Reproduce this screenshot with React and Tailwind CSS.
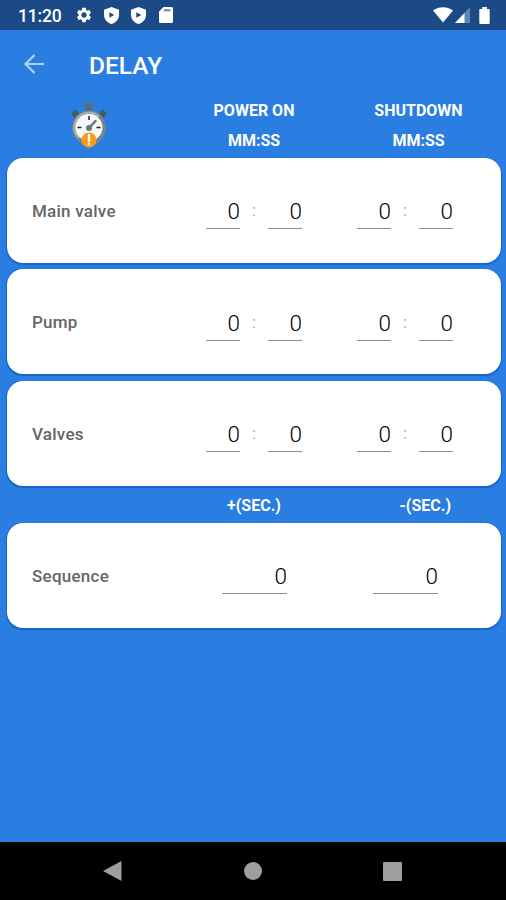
import React, { useState } from 'react';
import { MdSettings } from 'react-icons/md';

const ROWS = ['Main valve', 'Pump', 'Valves'];

function ShieldIcon() {
    return (
        <svg className="w-[15px] h-[17px]" viewBox="0 0 15 17">
            <path d="M7.5 0 15 2.800V8c0 4.200-3.200 7.800-7.500 9C3.200 15.800 0 12.200 0 8V2.800z" fill="#fff" />
            <path d="M5.300 5.200v5.600l5-2.800z" fill="#1b4a86" />
        </svg>
    );
}

function StatusBar() {
    return (
        <div className="flex h-[30px] items-center bg-[#1b4a86] pl-[18px] pr-[16px] text-white">
            <span className="w-[58px] pt-[3px] text-[17.500px] font-medium leading-none tracking-[-0.2px]">11:20</span>
            <MdSettings className="h-[18px] w-[18px] -ml-px" />
            <div className="ml-[11px] flex gap-[12px]">
                <ShieldIcon />
                <ShieldIcon />
            </div>
            <svg className="ml-[13px] h-[16px] w-[14px]" viewBox="0 0 14 16">
                <path d="M4.500 0H12.500a1.500 1.500 0 0 1 1.500 1.500v13a1.500 1.500 0 0 1-1.500 1.500h-11A1.500 1.500 0 0 1 0 14.500V4.500z" fill="#fff" />
                <path d="M5 2h6.500v2.500H5z" fill="#7f9cc0" />
            </svg>
            <svg className="ml-auto h-[16px] w-[20px]" viewBox="0 0 20 16">
                <path d="M0 3.500C5.500-1 14.500-1 20 3.500L10 15.500z" fill="#fff" />
            </svg>
            <svg className="ml-[2px] h-[16px] w-[15px]" viewBox="0 0 15 16">
                <path d="M15 0v16H0z" fill="#5f86b3" />
                <path d="M9.500 5.900V16H0z" fill="#fff" />
            </svg>
            <svg className="ml-[9px] h-[17px] w-[11px]" viewBox="0 0 11 18">
                <path d="M3 0h5v2h2a1 1 0 0 1 1 1v14a1 1 0 0 1-1 1H1a1 1 0 0 1-1-1V3a1 1 0 0 1 1-1h2z" fill="#fff" />
            </svg>
        </div>
    );
}

// 경고 표시가 붙은 스톱워치
function StopwatchIcon() {
    return (
        <svg className="h-[48px] w-[38px]" viewBox="0 0 38 48">
            <rect x="16.500" y="4" width="5" height="6" fill="#56656d" />
            <rect x="14.500" y="1" width="9" height="5" rx="1.500" fill="#5f6f77" />
            <path d="M1 11.500 5.500 7.500l4 4-5 5z" fill="#4b5960" />
            <path d="M37 11.500 32.500 7.500l-4 4 5 5z" fill="#4b5960" />
            <path d="M19 8.500a17 17 0 0 1 17 17c0 9-7 16-17 21C9 41.500 2 34.500 2 25.500a17 17 0 0 1 17-17z" fill="#73868c" />
            <path d="M19 9.500a16 16 0 0 0-11 27.500L30 14a16 16 0 0 0-11-4.500z" fill="#a2b0b3" />
            <circle cx="19" cy="25.500" r="13.500" fill="#f7f7f5" />
            <path d="M19 14v4M7.500 25.500h4M26.500 25.500h4" stroke="#222" strokeWidth="1.500" />
            <path d="m19 26 6.500-7" stroke="#657981" strokeWidth="2.500" strokeLinecap="round" />
            <circle cx="19" cy="26" r="3" fill="#657981" />
            <circle cx="19" cy="38" r="7.500" fill="#f99a1c" />
            <path d="M19 33v6" stroke="#fff" strokeWidth="2.400" strokeLinecap="round" />
            <circle cx="19" cy="42.300" r="1.300" fill="#fff" />
        </svg>
    );
}

function Card({ label, children }) {
    return (
        <div className="flex h-[105px] items-center rounded-[16px] bg-white pl-[25px] pt-[2px] shadow-[0_1px_1px_1px_rgba(0,80,180,0.5)]">
            <span className="pt-px text-[17px] font-medium tracking-[0.25px] text-[#666]">{label}</span>
            {children}
        </div>
    );
}

function NumberField({ value, onChange, className }) {
    return (
        <input
            value={value}
            onChange={(e) => onChange(e.target.value)}
            className={`h-[36px] border-b border-[#8c8c8c] bg-transparent pt-px text-right text-[22.500px] font-light text-black outline-none ${className}`}
        />
    );
}

function TimeField() {
    const [min, setMin] = useState('0');
    const [sec, setSec] = useState('0');

    return (
        <div className="flex items-center">
            <NumberField value={min} onChange={setMin} className="w-[34px]" />
            <span className="w-[28px] text-center text-[17px] text-[#aaa]">:</span>
            <NumberField value={sec} onChange={setSec} className="w-[34px]" />
        </div>
    );
}

export default function App() {
    const [plus, setPlus] = useState('0');
    const [minus, setMinus] = useState('0');

    return (
        <div className="flex h-[900px] w-[506px] flex-col overflow-hidden bg-[#2a7de1] font-[Roboto,sans-serif]">
            <StatusBar />

            {/* 앱 바 */}
            <div className="flex h-[70px] items-center pl-[24px]">
                <svg className="-mt-[2px] h-[20px] w-[20px]" viewBox="0 0 20 20" fill="none" stroke="#b4d0f5" strokeWidth="2.200">
                    <path d="M20 10H2M10.500 1 1.500 10l9 9" />
                </svg>
                <h1 className="ml-[45px] pt-[2px] text-[24.500px] font-medium leading-none text-white">DELAY</h1>
            </div>

            {/* 열 제목 */}
            <div className="flex h-[57px] text-[16px] font-bold leading-[30px] text-white">
                <div className="flex w-[178px] justify-center pt-[2px]">
                    <StopwatchIcon />
                </div>
                <div className="w-[152px] -mt-[4px] text-center">
                    <p>POWER ON</p>
                    <p>MM:SS</p>
                </div>
                <div className="w-[176px] -mt-[4px] pl-px text-center">
                    <p>SHUTDOWN</p>
                    <p>MM:SS</p>
                </div>
            </div>

            <div className="flex flex-col gap-[6.500px] pl-[7px] pr-[5px] pt-[0.500px]">
                {ROWS.map((label) => (
                    <Card key={label} label={label}>
                        <div className="ml-auto mr-[48px] flex gap-[55px]">
                            <TimeField />
                            <TimeField />
                        </div>
                    </Card>
                ))}
            </div>

            <div className="flex h-[37px] items-center pt-[4px] text-[16px] font-bold text-white">
                <span className="ml-[178px] w-[152px] shrink-0 text-center">+(SEC.)</span>
                <span className="w-[121px] shrink-0 text-right">-(SEC.)</span>
            </div>

            <div className="pl-[7px] pr-[5px]">
                <Card label="Sequence">
                    <div className="ml-auto mr-[63px] flex gap-[86px]">
                        <NumberField value={plus} onChange={setPlus} className="w-[65px]" />
                        <NumberField value={minus} onChange={setMinus} className="w-[65px]" />
                    </div>
                </Card>
            </div>

            {/* 하단 내비게이션 */}
            <div className="mt-auto flex h-[58px] items-center bg-black pl-[103px]">
                <svg className="h-[20px] w-[19px]" viewBox="0 0 19 20">
                    <path d="M18.500 0v20L0 10z" fill="#9e9e9e" />
                </svg>
                <span className="ml-[122px] h-[18px] w-[18px] rounded-full bg-[#9e9e9e]" />
                <span className="ml-[121px] h-[19px] w-[19px] rounded-[1px] bg-[#9e9e9e]" />
            </div>
        </div>
    );
}
